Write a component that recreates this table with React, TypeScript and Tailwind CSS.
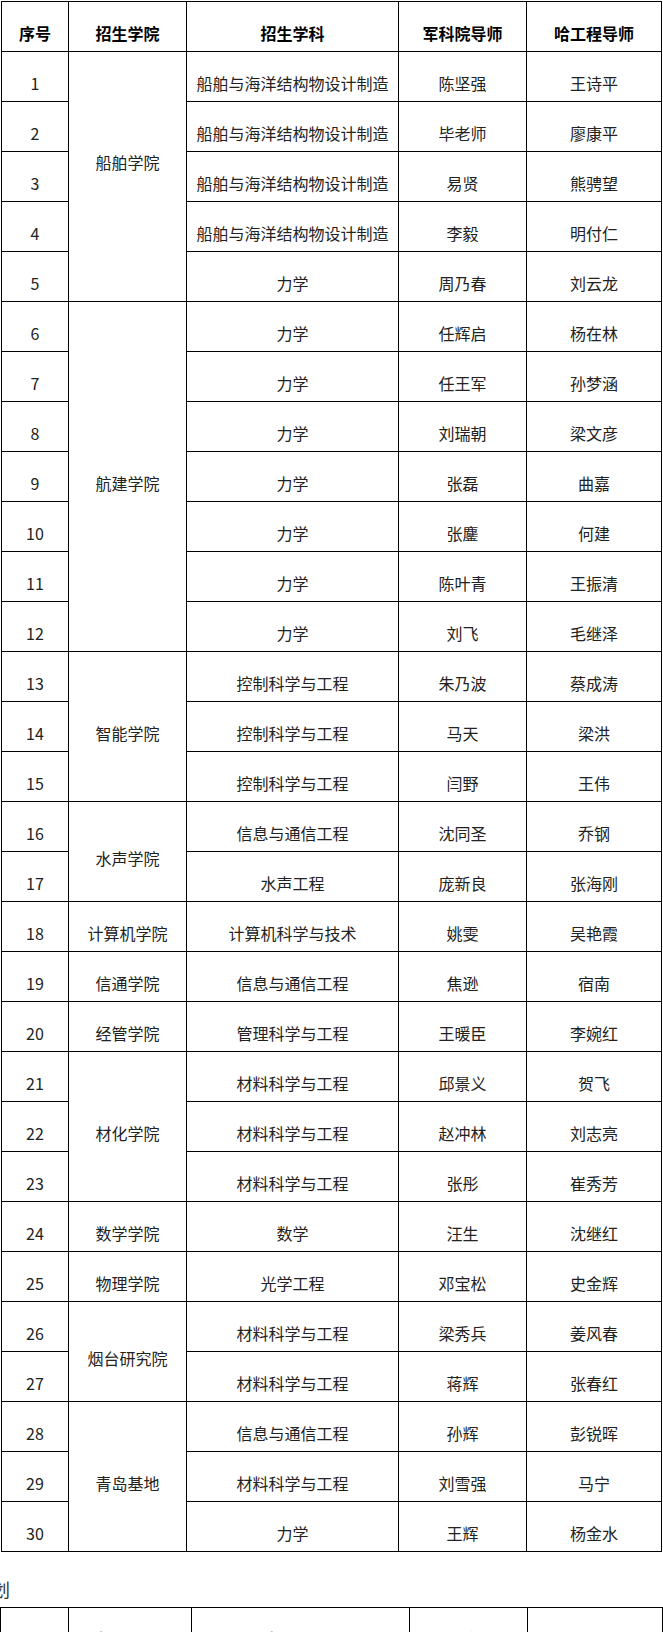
import React from "react";

type Row = {
  no: number;
  college?: string;
  span?: number;
  shift?: boolean;
  major: string;
  kxy: string;
  hgc: string;
};

const rows: Row[] = [
  { no: 1, college: "船舶学院", span: 5, shift: true, major: "船舶与海洋结构物设计制造", kxy: "陈坚强", hgc: "王诗平" },
  { no: 2, major: "船舶与海洋结构物设计制造", kxy: "毕老师", hgc: "廖康平" },
  { no: 3, major: "船舶与海洋结构物设计制造", kxy: "易贤", hgc: "熊骋望" },
  { no: 4, major: "船舶与海洋结构物设计制造", kxy: "李毅", hgc: "明付仁" },
  { no: 5, major: "力学", kxy: "周乃春", hgc: "刘云龙" },
  { no: 6, college: "航建学院", span: 7, major: "力学", kxy: "任辉启", hgc: "杨在林" },
  { no: 7, major: "力学", kxy: "任王军", hgc: "孙梦涵" },
  { no: 8, major: "力学", kxy: "刘瑞朝", hgc: "梁文彦" },
  { no: 9, major: "力学", kxy: "张磊", hgc: "曲嘉" },
  { no: 10, major: "力学", kxy: "张鏖", hgc: "何建" },
  { no: 11, major: "力学", kxy: "陈叶青", hgc: "王振清" },
  { no: 12, major: "力学", kxy: "刘飞", hgc: "毛继泽" },
  { no: 13, college: "智能学院", span: 3, major: "控制科学与工程", kxy: "朱乃波", hgc: "蔡成涛" },
  { no: 14, major: "控制科学与工程", kxy: "马天", hgc: "梁洪" },
  { no: 15, major: "控制科学与工程", kxy: "闫野", hgc: "王伟" },
  { no: 16, college: "水声学院", span: 2, major: "信息与通信工程", kxy: "沈同圣", hgc: "乔钢" },
  { no: 17, major: "水声工程", kxy: "庞新良", hgc: "张海刚" },
  { no: 18, college: "计算机学院", span: 1, major: "计算机科学与技术", kxy: "姚雯", hgc: "吴艳霞" },
  { no: 19, college: "信通学院", span: 1, major: "信息与通信工程", kxy: "焦逊", hgc: "宿南" },
  { no: 20, college: "经管学院", span: 1, major: "管理科学与工程", kxy: "王暖臣", hgc: "李婉红" },
  { no: 21, college: "材化学院", span: 3, major: "材料科学与工程", kxy: "邱景义", hgc: "贺飞" },
  { no: 22, major: "材料科学与工程", kxy: "赵冲林", hgc: "刘志亮" },
  { no: 23, major: "材料科学与工程", kxy: "张彤", hgc: "崔秀芳" },
  { no: 24, college: "数学学院", span: 1, major: "数学", kxy: "汪生", hgc: "沈继红" },
  { no: 25, college: "物理学院", span: 1, major: "光学工程", kxy: "邓宝松", hgc: "史金辉" },
  { no: 26, college: "烟台研究院", span: 2, major: "材料科学与工程", kxy: "梁秀兵", hgc: "姜风春" },
  { no: 27, major: "材料科学与工程", kxy: "蒋辉", hgc: "张春红" },
  { no: 28, college: "青岛基地", span: 3, major: "信息与通信工程", kxy: "孙辉", hgc: "彭锐晖" },
  { no: 29, major: "材料科学与工程", kxy: "刘雪强", hgc: "马宁" },
  { no: 30, major: "力学", kxy: "王辉", hgc: "杨金水" },
];

const headers = ["序号", "招生学院", "招生学科", "军科院导师", "哈工程导师"];

const th = "border border-black pt-3 pb-0 align-middle text-center font-bold text-[16px] leading-6 text-black";
const td = "border border-black pt-3 pb-0 align-middle text-center text-[16px] leading-6 text-[#222]";

function HeaderRow() {
  return (
    <tr className="h-[50px]">
      {headers.map((h) => (
        <th key={h} className={th}>
          {h}
        </th>
      ))}
    </tr>
  );
}

export default function App() {
  return (
    <div
      className="h-[1632px] w-[663px] overflow-hidden bg-white"
      style={{ fontFamily: '"Noto Sans CJK SC", "Noto Sans", sans-serif' }}
    >
      <table className="ml-px mt-px table-fixed border-collapse w-[661px]">
        <colgroup>
          <col className="w-[67px]" />
          <col className="w-[118px]" />
          <col className="w-[212px]" />
          <col className="w-[128px]" />
          <col className="w-[135px]" />
        </colgroup>
        <thead>
          <HeaderRow />
        </thead>
        <tbody>
          {rows.map((r) => (
            <tr key={r.no} className="h-[50px]">
              <td className={td}>{r.no}</td>
              {r.college && (
                <td
                  rowSpan={r.span}
                  className={
                    r.shift
                      ? "border border-black pt-0 pb-[30px] align-middle text-center text-[16px] leading-6 text-[#222]"
                      : td
                  }
                >
                  {r.college}
                </td>
              )}
              <td className={td}>{r.major}</td>
              <td className={td}>{r.kxy}</td>
              <td className={td}>{r.hgc}</td>
            </tr>
          ))}
        </tbody>
      </table>

      <div className="h-[55px] pt-[26px] text-[18px] leading-[22px] text-[#333]">
        <span className="-ml-2">划</span>
      </div>

      <table className="table-fixed border-collapse w-[662px]">
        <colgroup>
          <col className="w-[68px]" />
          <col className="w-[123px]" />
          <col className="w-[218px]" />
          <col className="w-[118px]" />
          <col className="w-[135px]" />
        </colgroup>
        <thead>
          <HeaderRow />
        </thead>
      </table>
    </div>
  );
}
